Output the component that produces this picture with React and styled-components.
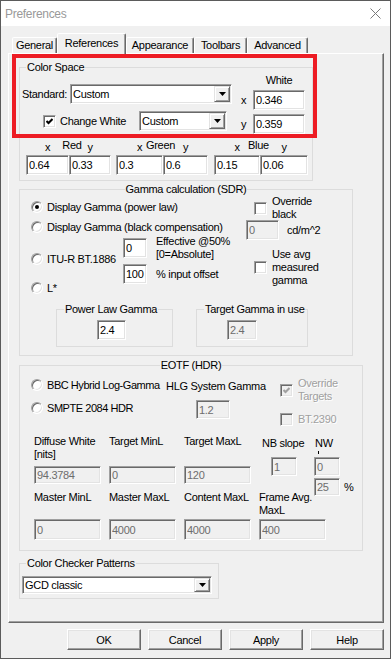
import React from 'react'
import styled, { createGlobalStyle } from 'styled-components'

const GlobalStyle = createGlobalStyle`
  html, body {
    margin: 0;
    padding: 0;
    background: #fff;
  }
  body {
    font-family: "Liberation Sans", Arial, sans-serif;
    font-size: 11px;
    letter-spacing: -0.3px;
    color: #000;
  }
`

const Window = styled.div`
  position: relative;
  width: 391px;
  height: 659px;
  box-sizing: border-box;
  border: 1px solid #5b5b5b;
  background: #f0f0f0;
  display: flex;
  flex-direction: column;
`
const TitleBar = styled.div`
  flex: none;
  height: 25px;
  background: #fff;
  display: flex;
  align-items: center;
  justify-content: space-between;
  padding: 0 9px 0 4px;
`
const Title = styled.span`
  font-size: 12px;
  letter-spacing: -0.3px;
  color: #999;
`
const Body = styled.div`
  flex: 1;
  display: flex;
  flex-direction: column;
  padding: 7px 6px 0 7px;
`
const TabStrip = styled.div`
  position: relative;
  z-index: 1;
  display: flex;
  align-items: flex-end;
  height: 21px;
  padding-left: 4px;
  margin-bottom: -1px;
`
const Tab = styled.div`
  width: ${p => p.$w}px;
  height: ${p => (p.$active ? 21 : 16)}px;
  margin-bottom: ${p => (p.$active ? 0 : 1)}px;
  box-sizing: border-box;
  border: 1px solid;
  border-bottom: none;
  border-color: #fff #696969 transparent #fff;
  border-radius: 2px 2px 0 0;
  box-shadow: inset -1px 0 0 #a0a0a0;
  background: #f0f0f0;
  text-align: center;
  line-height: ${p => (p.$active ? 18 : 14)}px;
`
const Panel = styled.div`
  flex: none;
  height: 570px;
  box-sizing: border-box;
  border: 1px solid;
  border-color: #fff #696969 #696969 #fff;
  box-shadow: inset -1px -1px 0 #a0a0a0;
  padding: 7px 0 0 10px;
  display: flex;
  flex-direction: column;
  align-items: flex-start;
`
const ButtonRow = styled.div`
  display: flex;
  justify-content: flex-end;
  gap: 7px;
  margin-top: 6px;
`
const Button = styled.button`
  width: 74px;
  height: 21px;
  box-sizing: border-box;
  margin: 0;
  padding: 0;
  border: 1px solid;
  border-color: #fff #696969 #696969 #fff;
  box-shadow: inset -1px -1px 0 #a0a0a0, inset 1px 1px 0 #e3e3e3;
  background: #f0f0f0;
  font: inherit;
  letter-spacing: inherit;
  color: #000;
`
const Highlight = styled.div`
  position: absolute;
  left: 11px;
  top: 53px;
  width: 305px;
  height: 84px;
  box-sizing: border-box;
  border: 4px solid #ed1c24;
  pointer-events: none;
`

/* group boxes */
const Group = styled.fieldset`
  box-sizing: border-box;
  width: ${p => p.$w}px;
  min-width: 0;
  margin: ${p => p.$mt || 0}px 0 0 ${p => p.$ml || 0}px;
  padding: 0;
  border: 1px solid #dcdcdc;
`
const Legend = styled.legend`
  padding: 0 1px;
  margin: ${p => (p.$center ? '0 auto' : `0 0 0 ${p.$ml ?? 6}px`)};
  line-height: 12px;
  white-space: nowrap;
`

/* controls */
const Text = styled.span`
  display: block;
  flex: none;
  width: ${p => (p.$w ? `${p.$w}px` : 'auto')};
  margin: ${p => p.$mt || 0}px 0 0 ${p => p.$ml || 0}px;
  line-height: ${p => p.$lh || 13}px;
  white-space: nowrap;
  color: ${p => (p.$disabled ? '#a0a0a0' : '#000')};
  text-shadow: ${p => (p.$disabled ? '1px 1px 0 #fff' : 'none')};
`
const Edit = styled.input.attrs({ type: 'text', readOnly: true })`
  display: block;
  flex: none;
  width: ${p => p.$w}px;
  height: ${p => p.$h || 20}px;
  box-sizing: border-box;
  margin: ${p => p.$mt || 0}px 0 0 ${p => p.$ml || 0}px;
  padding: 0 0 0 2px;
  border: 1px solid;
  border-color: #a0a0a0 #fff #fff #a0a0a0;
  box-shadow: inset 1px 1px 0 #696969, inset -1px -1px 0 #e3e3e3;
  background: #fff;
  font: inherit;
  letter-spacing: inherit;
  color: #000;
  outline: none;
  &:disabled {
    background: #f0f0f0;
    color: #6d6d6d;
    -webkit-text-fill-color: #6d6d6d;
  }
`
const ComboBox = styled.div`
  display: flex;
  flex: none;
  width: ${p => p.$w}px;
  height: ${p => p.$h || 20}px;
  box-sizing: border-box;
  padding: 1px;
  border: 1px solid;
  border-color: #a0a0a0 #fff #fff #a0a0a0;
  box-shadow: inset 1px 1px 0 #696969, inset -1px -1px 0 #e3e3e3;
  background: #fff;
`
const ComboText = styled.span`
  flex: 1;
  display: flex;
  align-items: center;
  padding-left: 1px;
`
const DropButton = styled.span`
  width: 16px;
  box-sizing: border-box;
  display: flex;
  align-items: center;
  justify-content: center;
  border: 1px solid;
  border-color: #e3e3e3 #696969 #696969 #e3e3e3;
  box-shadow: inset 1px 1px 0 #fff, inset -1px -1px 0 #a0a0a0;
  background: #f0f0f0;
`
const Box = styled.span`
  width: 13px;
  height: 13px;
  flex: none;
  box-sizing: border-box;
  display: flex;
  align-items: center;
  justify-content: center;
  border: 1px solid;
  border-color: #a0a0a0 #fff #fff #a0a0a0;
  box-shadow: inset 1px 1px 0 #696969, inset -1px -1px 0 #e3e3e3;
  background: ${p => (p.$disabled ? '#f0f0f0' : '#fff')};
`
const RadioDot = styled.span`
  width: 12px;
  height: 12px;
  flex: none;
  box-sizing: border-box;
  border-radius: 50%;
  display: flex;
  align-items: center;
  justify-content: center;
  border: 1px solid;
  border-color: #a0a0a0 #fff #fff #a0a0a0;
  box-shadow: inset 1px 1px 0 #696969, inset -1px -1px 0 #e3e3e3;
  background: #fff;
  &::after {
    content: '';
    width: 4px;
    height: 4px;
    border-radius: 50%;
    background: ${p => (p.$on ? '#000' : 'transparent')};
  }
`

const Combo = ({ w, h, value }) => (
  <ComboBox $w={w} $h={h}>
    <ComboText>{value}</ComboText>
    <DropButton>
      <svg width="7" height="4" viewBox="0 0 7 4">
        <polygon points="0,0 7,0 3.5,4" fill="#000" />
      </svg>
    </DropButton>
  </ComboBox>
)

const CheckBox = ({ checked, disabled }) => (
  <Box $disabled={disabled}>
    {checked && (
      <svg width="7" height="7" viewBox="0 0 7 7">
        <path d="M0.5 3 L2.5 5 L6.5 1" stroke={disabled ? '#a0a0a0' : '#000'} strokeWidth="2" fill="none" />
      </svg>
    )}
  </Box>
)

/* rows */
const Row = styled.div`
  display: flex;
  align-items: center;
  margin: ${p => p.$mt || 0}px 0 0 ${p => p.$ml || 0}px;
`
const RadioRow = styled.div`
  display: flex;
  align-items: center;
  gap: 4px;
  height: 12px;
  line-height: 12px;
  white-space: nowrap;
  margin-top: ${p => p.$mt || 0}px;
`
const CheckRow = styled.div`
  display: flex;
  align-items: center;
  gap: 5px;
  padding-left: ${p => p.$pl ?? 8}px;
  margin-top: ${p => p.$mt || 0}px;
`

/* color space */
const ColorSpaceBody = styled.div`
  padding: 0 0 5px 2px;
`
const TopBlock = styled.div`
  display: flex;
  align-items: flex-start;
`
const LeftCol = styled.div`
  width: 210px;
  padding-top: 11px;
`
const RightCol = styled.div`
  margin-left: 9px;
`
const WhiteHeader = styled.div`
  margin-top: 1px;
  padding-left: 12px;
  width: 52px;
  text-align: center;
  line-height: 12px;
`
const AxisLabel = styled.span`
  width: 12px;
  line-height: 12px;
`
const PrimaryRow = styled.div`
  display: flex;
  margin: 5px 0 0 4px;
`
const Pair = styled.div`
  margin-left: ${p => p.$ml}px;
`
const PairHead = styled.div`
  display: grid;
  grid-template-columns: ${p => p.$a}px ${p => p.$b}px;
  height: 16px;
  line-height: 12px;
`
const PairName = styled.span`
  grid-row: 1;
  grid-column: 1 / 3;
  justify-self: center;
  margin-left: ${p => p.$dx}px;
`
const PairAxis = styled.span`
  grid-row: 1;
  grid-column: ${p => p.$col};
  justify-self: center;
  margin-top: 2px;
`
const PairInputs = styled.div`
  display: flex;
`

/* gamma */
const GammaBody = styled.div`
  padding-bottom: 8px;
`
const GammaTop = styled.div`
  display: flex;
  align-items: flex-start;
`
const GammaLeft = styled.div`
  width: 226px;
  box-sizing: border-box;
  padding-left: 11px;
`
const GammaRight = styled.div`
  width: 105px;
`
const ItuGrid = styled.div`
  display: grid;
  grid-template-columns: 92px 24px auto;
  grid-template-rows: 20px 20px;
  row-gap: 6px;
  margin-top: 5px;
`
const ItuRadio = styled(RadioRow)`
  grid-column: 1;
  grid-row: 1 / 3;
  align-self: center;
  margin-bottom: 4px;
`
const ItuEdit = styled(Edit)`
  grid-column: 2;
  grid-row: ${p => p.$row};
`
const ItuNote = styled(Text)`
  grid-column: 3;
  grid-row: ${p => p.$row};
  align-self: ${p => (p.$row === 1 ? 'start' : 'center')};
  margin: ${p => (p.$row === 1 ? -3 : 0)}px 0 0 9px;
`
const SubRow = styled.div`
  display: flex;
  margin-top: 9px;
`
const SubBody = styled.div`
  padding: 5px 0 6px ${p => p.$pl}px;
`

/* eotf */
const EotfBody = styled.div`
  padding-bottom: 10px;
`
const EotfTop = styled.div`
  display: flex;
  align-items: flex-start;
  margin-top: 7px;
`
const EotfLeft = styled.div`
  width: 146px;
  box-sizing: border-box;
  padding-left: 11px;
  letter-spacing: -0.45px;
`
const EotfMid = styled.div`
  width: 114px;
`
const LumaGrid = styled.div`
  display: grid;
  grid-template-columns: repeat(4, 67px);
  grid-template-rows: 31px 25px 28px 21px;
  column-gap: 8px;
  align-items: start;
  margin: 9px 0 0 14px;
`
const NbBlock = styled.div`
  grid-column: 4;
  grid-row: 1 / 3;
  display: flex;
  width: 95px;
  margin: 2px 0 0 3px;
`
const NbCol = styled.div`
  width: 52px;
`
const Tick = styled.div`
  width: 1px;
  height: 3px;
  margin: 1px 0 0 4px;
  background: #000;
`
const CheckerBody = styled.div`
  padding: 7px 0 4px 2px;
`

const tabs = [
  { label: 'General', w: 45 },
  { label: 'References', w: 69, active: true },
  { label: 'Appearance', w: 68 },
  { label: 'Toolbars', w: 53 },
  { label: 'Advanced', w: 61 },
]

const primaries = [
  { name: 'Red', x: '0.64', y: '0.33', w: [43, 42], ml: 0, dx: 7 },
  { name: 'Green', x: '0.3', y: '0.6', w: [47, 45], ml: 5, dx: -3 },
  { name: 'Blue', x: '0.15', y: '0.06', w: [46, 48], ml: 6, dx: -5 },
]

const lumaTop = [
  { label: ['Diffuse White', '[nits]'], value: '94.3784' },
  { label: ['Target MinL'], value: '0' },
  { label: ['Target MaxL'], value: '120' },
]
const lumaBottom = [
  { label: ['Master MinL'], value: '0' },
  { label: ['Master MaxL'], value: '4000' },
  { label: ['Content MaxL'], value: '4000' },
  { label: ['Frame Avg.', 'MaxL'], value: '400' },
]

const Lines = ({ lines }) =>
  lines.map((l, i) => (
    <React.Fragment key={i}>
      {i > 0 && <br />}
      {l}
    </React.Fragment>
  ))

export default function App() {
  return (
    <>
      <GlobalStyle />
      <Window>
        <TitleBar>
          <Title>Preferences</Title>
          <svg width="11" height="11" viewBox="0 0 11 11">
            <path d="M0.5 0.5 L10.5 10.5 M10.5 0.5 L0.5 10.5" stroke="#7a7a7a" strokeWidth="1" />
          </svg>
        </TitleBar>
        <Body>
          <TabStrip>
            {tabs.map(t => (
              <Tab key={t.label} $w={t.w} $active={t.active}>{t.label}</Tab>
            ))}
          </TabStrip>
          <Panel>
            <Group $w={294}>
              <Legend>Color Space</Legend>
              <ColorSpaceBody>
                <TopBlock>
                  <LeftCol>
                    <Row>
                      <Text $w={48} $lh={12}>Standard:</Text>
                      <Combo w={162} value="Custom" />
                    </Row>
                    <Row $mt={7} $ml={21}>
                      <CheckBox checked />
                      <Text $w={79} $ml={4} $lh={12}>Change White</Text>
                      <Combo w={88} value="Custom" />
                    </Row>
                  </LeftCol>
                  <RightCol>
                    <WhiteHeader>White</WhiteHeader>
                    <Row $mt={4}>
                      <AxisLabel>x</AxisLabel>
                      <Edit $w={52} value="0.346" />
                    </Row>
                    <Row $mt={4}>
                      <AxisLabel>y</AxisLabel>
                      <Edit $w={52} value="0.359" />
                    </Row>
                  </RightCol>
                </TopBlock>
                <PrimaryRow>
                  {primaries.map(p => (
                    <Pair key={p.name} $ml={p.ml}>
                      <PairHead $a={p.w[0]} $b={p.w[1]}>
                        <PairAxis $col={1}>x</PairAxis>
                        <PairName $dx={p.dx}>{p.name}</PairName>
                        <PairAxis $col={2}>y</PairAxis>
                      </PairHead>
                      <PairInputs>
                        <Edit $w={p.w[0]} value={p.x} />
                        <Edit $w={p.w[1]} value={p.y} />
                      </PairInputs>
                    </Pair>
                  ))}
                </PrimaryRow>
              </ColorSpaceBody>
            </Group>

            <Group $w={334} $mt={2}>
              <Legend $center>Gamma calculation (SDR)</Legend>
              <GammaBody>
                <GammaTop>
                  <GammaLeft>
                    <RadioRow $mt={6}>
                      <RadioDot $on />
                      <span>Display Gamma (power law)</span>
                    </RadioRow>
                    <RadioRow $mt={8}>
                      <RadioDot />
                      <span>Display Gamma (black compensation)</span>
                    </RadioRow>
                    <ItuGrid>
                      <ItuRadio>
                        <RadioDot />
                        <span>ITU-R BT.1886</span>
                      </ItuRadio>
                      <ItuEdit $row={1} $w={24} value="0" />
                      <ItuNote $row={1}>Effective @50%<br />[0=Absolute]</ItuNote>
                      <ItuEdit $row={2} $w={24} value="100" />
                      <ItuNote $row={2}>% input offset</ItuNote>
                    </ItuGrid>
                    <RadioRow $mt={-2}>
                      <RadioDot />
                      <span>L*</span>
                    </RadioRow>
                  </GammaLeft>
                  <GammaRight>
                    <CheckRow>
                      <CheckBox />
                      <Text>Override<br />black</Text>
                    </CheckRow>
                    <Row $mt={-1}>
                      <Edit $w={33} value="0" disabled />
                      <Text $ml={8}>cd/m^2</Text>
                    </Row>
                    <CheckRow $mt={8}>
                      <CheckBox />
                      <Text>Use avg<br />measured<br />gamma</Text>
                    </CheckRow>
                  </GammaRight>
                </GammaTop>
                <SubRow>
                  <Group $w={117} $ml={36}>
                    <Legend $ml={7}>Power Law Gamma</Legend>
                    <SubBody $pl={40}>
                      <Edit $w={29} value="2.4" />
                    </SubBody>
                  </Group>
                  <Group $w={112} $ml={23}>
                    <Legend $ml={7}>Target Gamma in use</Legend>
                    <SubBody $pl={30}>
                      <Edit $w={30} value="2.4" disabled />
                    </SubBody>
                  </Group>
                </SubRow>
              </GammaBody>
            </Group>

            <Group $w={344} $mt={3}>
              <Legend $center>EOTF (HDR)</Legend>
              <EotfBody>
                <EotfTop>
                  <EotfLeft>
                    <RadioRow $mt={1}>
                      <RadioDot />
                      <span>BBC Hybrid Log-Gamma</span>
                    </RadioRow>
                    <RadioRow $mt={11}>
                      <RadioDot />
                      <span>SMPTE 2084 HDR</span>
                    </RadioRow>
                  </EotfLeft>
                  <EotfMid>
                    <Text $mt={2}>HLG System Gamma</Text>
                    <Edit $w={34} $h={19} $mt={7} $ml={30} value="1.2" disabled />
                  </EotfMid>
                  <div>
                    <CheckRow $pl={0} $mt={-1}>
                      <CheckBox checked disabled />
                      <Text $disabled>Override<br />Targets</Text>
                    </CheckRow>
                    <CheckRow $pl={0} $mt={10}>
                      <CheckBox disabled />
                      <Text $disabled>BT.2390</Text>
                    </CheckRow>
                  </div>
                </EotfTop>
                <LumaGrid>
                  <NbBlock>
                    <NbCol>
                      <Text>NB slope</Text>
                      <Edit $w={26} $h={19} $mt={7} $ml={9} value="1" disabled />
                    </NbCol>
                    <div>
                      <Text $ml={1}>NW</Text>
                      <Tick />
                      <Edit $w={26} $h={19} $mt={3} value="0" disabled />
                      <Row $mt={2}>
                        <Edit $w={26} $h={18} value="25" disabled />
                        <Text $ml={4}>%</Text>
                      </Row>
                    </div>
                  </NbBlock>
                  {lumaTop.map(f => (
                    <Text key={f.label[0]}><Lines lines={f.label} /></Text>
                  ))}
                  {lumaTop.map(f => (
                    <Edit key={f.label[0]} $w={67} $h={18} value={f.value} disabled />
                  ))}
                  {lumaBottom.map(f => (
                    <Text key={f.label[0]}><Lines lines={f.label} /></Text>
                  ))}
                  {lumaBottom.map(f => (
                    <Edit key={f.label[0]} $w={67} $h={21} value={f.value} disabled />
                  ))}
                </LumaGrid>
              </EotfBody>
            </Group>

            <Group $w={200} $mt={6}>
              <Legend>Color Checker Patterns</Legend>
              <CheckerBody>
                <Combo w={190} h={18} value="GCD classic" />
              </CheckerBody>
            </Group>
          </Panel>
          <ButtonRow>
            <Button>OK</Button>
            <Button>Cancel</Button>
            <Button>Apply</Button>
            <Button>Help</Button>
          </ButtonRow>
        </Body>
        <Highlight />
      </Window>
    </>
  )
}
